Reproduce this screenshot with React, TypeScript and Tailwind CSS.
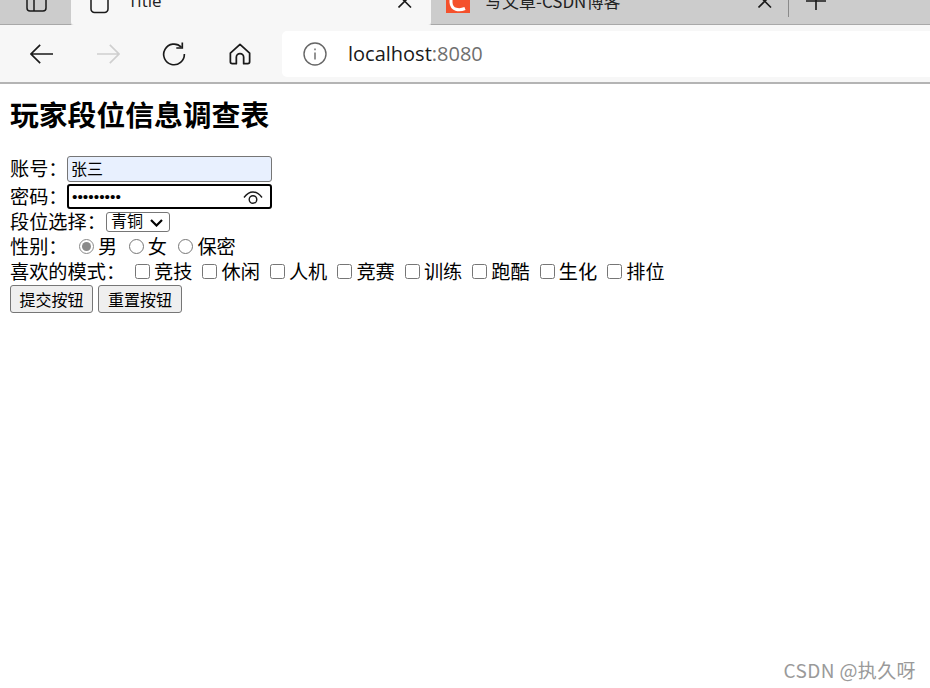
const modes = [
  { label: '竞技', gap: 'ml-[9px]' },
  { label: '休闲', gap: 'ml-[10.100px]' },
  { label: '人机', gap: 'ml-[10.100px]' },
  { label: '竞赛', gap: 'ml-[10.100px]' },
  { label: '训练', gap: 'ml-[10.100px]' },
  { label: '跑酷', gap: 'ml-[10.100px]' },
  { label: '生化', gap: 'ml-[10.100px]' },
  { label: '排位', gap: 'ml-[10.100px]' },
];

const cjk = "font-['Noto_Sans_CJK_SC','Liberation_Sans',sans-serif]";

function Toolbar() {
  return (
    <div className="flex h-[57px] items-center bg-[#f7f7f7]">
      <div className="flex w-[282px] items-center">
        {/* back */}
        <svg className="ml-[30px]" width="24" height="22" viewBox="0 0 26 24" fill="none" stroke="#1a1a1a" strokeWidth="1.8">
          <path d="M1 12h24M11 2 1 12l10 10" />
        </svg>
        {/* forward, disabled */}
        <svg className="ml-[42px]" width="24" height="22" viewBox="0 0 26 24" fill="none" stroke="#cfcfcf" strokeWidth="1.8">
          <path d="M1 12h24M15 2l10 10-10 10" />
        </svg>
        {/* reload */}
        <svg className="ml-[42px]" width="24" height="24" viewBox="0 0 26 26" fill="none" stroke="#1a1a1a" strokeWidth="1.8">
          <path d="M21 5.600A11.200 11.200 0 1 0 24.200 13" />
          <path d="M22 0.500v6h-6.500" />
        </svg>
        {/* home */}
        <svg className="ml-[43px]" width="22" height="22" viewBox="0 0 24 24" fill="none" stroke="#1a1a1a" strokeWidth="1.9" strokeLinejoin="round">
          <path d="M12 1.500 1.500 11v9.500a2 2 0 0 0 2 2H8v-7a4 4 0 0 1 8 0v7h4.500a2 2 0 0 0 2-2V11z" />
        </svg>
      </div>
      <div className="flex h-[46px] flex-1 items-center rounded-l-[5px] bg-white">
        <svg className="ml-[21px]" width="24" height="24" viewBox="0 0 24 24" fill="none" stroke="#666666" strokeWidth="1.4">
          <circle cx="12" cy="12" r="11" />
          <path d="M12 10.500v7M12 6.500v1.800" />
        </svg>
        <span className="ml-[21px] text-[20px] font-['Open_Sans','Liberation_Sans',sans-serif] text-[#1a1a1a]">
          localhost<span className="text-[#6f6f6f]">:8080</span>
        </span>
      </div>
    </div>
  );
}

function TabStrip() {
  return (
    <div className="flex h-[25px] overflow-hidden bg-[#cccccc] text-[#222222]">
      {/* sidebar toggle */}
      <div className="w-[71px] border-b border-[#a8a8a8] pl-[26px]">
        <svg width="21" height="12" viewBox="0 0 21 12" fill="none" stroke="#1a1a1a" strokeWidth="1.5">
          <path d="M1 -4v12a3 3 0 0 0 3 3h13a3 3 0 0 0 3-3V-4M8 -4v15" />
        </svg>
      </div>
      <div className="flex h-[25px] w-[360px] rounded-b-[3px] bg-[#f7f7f7]">
        <svg className="ml-[19px]" width="19" height="14" viewBox="0 0 19 14" fill="none" stroke="#1a1a1a" strokeWidth="1.5">
          <path d="M1 -4v13a3.500 3.500 0 0 0 3.500 3.500h10a3.500 3.500 0 0 0 3.500-3.500V-4" />
        </svg>
        <span className="ml-[19px] mt-[-11px] text-[17px] leading-[24px] font-['Open_Sans','Liberation_Sans',sans-serif]">Title</span>
        <svg className="ml-auto mr-[19px]" width="14" height="8" viewBox="0 0 14 8" fill="none" stroke="#1a1a1a" strokeWidth="1.6">
          <path d="M0.500 -5 13 7.500M13 -5 0.500 7.500" />
        </svg>
      </div>
      <div className="flex w-[357px] border-b border-[#a8a8a8] pl-[15px]">
        {/* CSDN favicon, cropped by the top edge */}
        <svg width="24" height="13" viewBox="0 0 24 13" fill="none" className="bg-[#f4512c]">
          <path d="M19 8.500C13 11 5.500 10 5 2.500V0" stroke="#ffffff" strokeWidth="3" />
        </svg>
        <span className={`ml-[15px] mt-[-11px] text-[17px] leading-[24px] ${cjk}`}>写文章-CSDN博客</span>
        <svg className="ml-auto mr-[16px]" width="14" height="8" viewBox="0 0 14 8" fill="none" stroke="#1a1a1a" strokeWidth="1.6">
          <path d="M0.500 -5 13 7.500M13 -5 0.500 7.500" />
        </svg>
      </div>
      <div className="flex flex-1 border-b border-[#a8a8a8]">
        <div className="h-[17px] w-px bg-[#8a8a8a]" />
        <svg className="ml-[16px]" width="22" height="10" viewBox="0 0 22 10" fill="none" stroke="#1a1a1a" strokeWidth="1.6">
          <path d="M11 -8v18M1 1h20" />
        </svg>
      </div>
    </div>
  );
}

function GenderOption({ label, checked, gap }: { label: string; checked?: boolean; gap: string }) {
  return (
    <label className={`flex items-center ${gap}`}>
      <input type="radio" name="sex" defaultChecked={checked} className="m-0 h-[15px] w-[15px] accent-[#8a8a8a]" />
      <span className="ml-[4px]">{label}</span>
    </label>
  );
}

export default function App() {
  return (
    <div className={`relative h-[688px] w-[930px] overflow-hidden bg-white text-[19.2px] text-black ${cjk}`}>
      <TabStrip />
      <Toolbar />
      <div className="h-[2px] bg-[#b4b4b4]" />

      <div className="px-[10px] pt-[13px]">
        <h1 className="mb-[26px] text-[28.8px] font-bold leading-[33px]">玩家段位信息调查表</h1>

        <form>
          <div className="mb-[2px] flex h-[26px] items-center leading-none">
            <span className="w-[57px] shrink-0 whitespace-nowrap">账号：</span>
            <input
              defaultValue="张三"
              className="h-[26px] w-[205px] rounded-[3px] border border-[#767676] bg-[#e8f0fe] pl-[3px] pb-[2px] text-[16px] leading-none outline-none"
            />
          </div>
          <div className="flex h-[25px] items-center leading-none">
            <span className="w-[57px] shrink-0 whitespace-nowrap">密码：</span>
            <div className="relative">
              <input
                type="password"
                defaultValue="123456789"
                className="h-[25px] w-[205px] rounded-[3px] border-2 border-black bg-white px-[3px] text-[15.500px] outline-none font-['Liberation_Sans',sans-serif]"
              />
              <svg className="absolute right-[9px] top-[7px]" width="20" height="14" viewBox="0 0 20 14" fill="none" stroke="#1a1a1a" strokeWidth="1.4">
                <path d="M1 6.500C4 2.500 7 1 10 1s6 1.500 9 5.500" />
                <circle cx="10" cy="8.500" r="3.800" />
              </svg>
            </div>
          </div>
          <div className="flex h-[26px] items-center leading-none">
            <span className="w-[96px] shrink-0 whitespace-nowrap">段位选择：</span>
            <div className="relative">
              <select className="block h-[20px] w-[64px] appearance-none rounded-[3px] border border-[#767676] bg-white py-0 pl-[4px] text-[16px] leading-[18px] font-['Liberation_Sans','Noto_Sans_CJK_SC',sans-serif]">
                <option>青铜</option>
              </select>
              <svg className="pointer-events-none absolute left-[44px] top-[7px]" width="13" height="8" viewBox="0 0 13 8" fill="none" stroke="#000000" strokeWidth="2.200">
                <path d="M1 1l5.500 5.500L12 1" />
              </svg>
            </div>
          </div>
          <div className="flex h-[24px] items-center leading-none">
            <span className="w-[69px] shrink-0 whitespace-nowrap">性别：</span>
            <GenderOption label="男" checked gap="" />
            <GenderOption label="女" gap="ml-[11.500px]" />
            <GenderOption label="保密" gap="ml-[11.500px]" />
          </div>
          <div className="flex h-[26px] items-center leading-none">
            <span className="w-[116px] shrink-0 whitespace-nowrap">喜欢的模式：</span>
            {modes.map((mode) => (
              <label key={mode.label} className={`flex items-center ${mode.gap}`}>
                <input type="checkbox" className="m-0 h-[15px] w-[15px]" />
                <span className="ml-[4px]">{mode.label}</span>
              </label>
            ))}
          </div>
          <div className="flex items-center">
            <button type="button" className="h-[28px] w-[83px] rounded-[3px] border border-[#767676] bg-[#efefef] text-[16px] leading-none">
              提交按钮
            </button>
            <button type="button" className="ml-[5px] h-[28px] w-[84px] rounded-[3px] border border-[#767676] bg-[#efefef] text-[16px] leading-none">
              重置按钮
            </button>
          </div>
        </form>
      </div>

      <div className="absolute right-[14px] top-[658px] text-[19px] leading-[24px] tracking-[0.4px] text-[#9a9a9a]">CSDN @执久呀</div>
    </div>
  );
}
